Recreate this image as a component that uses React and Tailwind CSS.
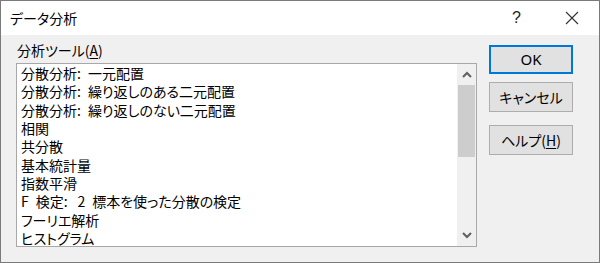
import React from "react";

const items = [
  "分散分析:\u2002一元配置",
  "分散分析:\u2002繰り返しのある二元配置",
  "分散分析:\u2002繰り返しのない二元配置",
  "相関",
  "共分散",
  "基本統計量",
  "指数平滑",
  "F\u2002検定:\u2002\u20092\u2002標本を使った分散の検定",
  "フーリエ解析",
  "ヒストグラム",
];

const font = { fontFamily: '"Noto Sans CJK JP", "Noto Sans", sans-serif' };

export default function App() {
  return (
    <div
      className="w-[600px] h-[263px] border border-[#7a7a7a] bg-[#f0f0f0] flex flex-col text-black overflow-hidden [font-feature-settings:'palt']"
      style={font}
    >
      <div className="h-[34px] bg-white flex items-center pl-[9px] shrink-0">
        <span className="text-[14px] leading-none">データ分析</span>
        <span className="ml-auto text-[16px] leading-none text-[#222] mr-[44px]" style={{ fontFamily: '"Liberation Sans", sans-serif' }}>?</span>
        <svg width="14" height="14" viewBox="0 0 14 14" className="mr-[20px]">
          <path d="M1 1 L13 13 M13 1 L1 13" stroke="#333" strokeWidth="1.1" fill="none" />
        </svg>
      </div>
      <div className="flex flex-1 pl-[15px] pt-[6px]">
        <div className="flex flex-col">
          <div className="text-[14px] leading-[18px] pl-[1px] h-[22px]">
            分析ツール(<span className="underline underline-offset-2">A</span>)
          </div>
          <div className="w-[461px] h-[184px] border border-[#a8a8a8] bg-white flex">
            <div className="flex-1 pl-[4px] pt-[0px] text-[14px] leading-[18.33px]">
              {items.map((t) => (
                <div key={t} className="whitespace-pre">{t}</div>
              ))}
            </div>
            <div className="w-[19px] bg-[#f0f0f0] flex flex-col items-center">
              <div className="h-[21px] flex items-center justify-center">
                <svg width="10" height="7" viewBox="0 0 10 7">
                  <path d="M1 6 L5 2 L9 6" stroke="#606060" strokeWidth="2" fill="none" />
                </svg>
              </div>
              <div className="w-[17px] h-[72px] bg-[#cdcdcd]" />
              <div className="flex-1" />
              <div className="h-[21px] flex items-center justify-center">
                <svg width="10" height="7" viewBox="0 0 10 7">
                  <path d="M1 1 L5 5 L9 1" stroke="#606060" strokeWidth="2" fill="none" />
                </svg>
              </div>
            </div>
          </div>
        </div>
        <div className="flex flex-col ml-[12px] pt-[4px]">
          <button className="w-[84px] h-[29px] border-2 border-[#0078d7] bg-[#e1e1e1] text-[15px] leading-none" style={{ fontFamily: '"Noto Sans", sans-serif' }}>
            OK
          </button>
          <button className="w-[84px] h-[30px] mt-[8px] border border-[#adadad] bg-[#e1e1e1] text-[14px] leading-none">
            キャンセル
          </button>
          <button className="w-[84px] h-[30px] mt-[13px] border border-[#adadad] bg-[#e1e1e1] text-[14px] leading-none">
            ヘルプ(<span className="underline underline-offset-2">H</span>)
          </button>
        </div>
      </div>
    </div>
  );
}
